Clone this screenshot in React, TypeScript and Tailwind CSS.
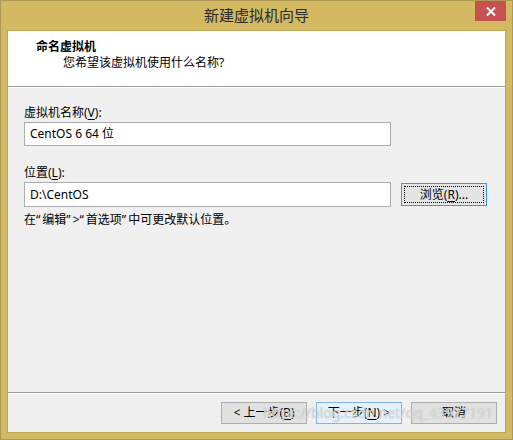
const font = "font-['Noto_Sans','Noto_Sans_CJK_SC',sans-serif]";

function Mnemonic({ k }: { k: string }) {
  return <span className="underline underline-offset-2">{k}</span>;
}

export default function App() {
  return (
    <div
      className={`${font} w-[513px] h-[440px] overflow-hidden flex flex-col bg-[#d2b962] border border-[#ac9a55] px-[7px] pb-[7px] text-[12px] text-black`}
    >
      {/* title bar */}
      <div className="relative h-[30px] flex items-center justify-center">
        <span className="text-[15px] text-[#2b2b2b] -mt-[1px]">新建虚拟机向导</span>
        <button className="absolute right-[-1px] top-0 w-[31px] h-[20px] bg-[#c75050] flex items-center justify-center">
          <svg width="10" height="9" viewBox="0 0 10 9">
            <path d="M1 0.5 L9 8.5 M9 0.5 L1 8.5" stroke="white" strokeWidth="2" />
          </svg>
        </button>
      </div>

      {/* client area */}
      <div className="flex-1 flex flex-col bg-[#f0f0f0] shadow-[0_0_0_1px_#bba653]">
        {/* header */}
        <div className="h-[56px] bg-white border-b border-[#a0a0a0] pt-[8px] pl-[28px] leading-[16px]">
          <div className="font-bold">命名虚拟机</div>
          <div className="pl-[27px]">您希望该虚拟机使用什么名称?</div>
        </div>
        <div className="h-px bg-white" />

        {/* body */}
        <div className="flex-1 flex flex-col px-[16px] pt-[17px] leading-[16px]">
          <div>
            虚拟机名称(<Mnemonic k="V" />):
          </div>
          <div className="mt-[1px] w-[367px] h-[24px] border border-[#abadb3] bg-white px-[5px] flex items-center">
            CentOS 6 64 位
          </div>

          <div className="mt-[19px]">
            位置(<Mnemonic k="L" />):
          </div>
          <div className="mt-[1px] flex items-center gap-[10px]">
            <div className="w-[367px] h-[25px] border border-[#abadb3] bg-white px-[5px] flex items-center">
              D:\CentOS
            </div>
            <button className="w-[86px] h-[23px] border border-[#3c96ea] bg-[#e5e5e5] p-[2px]">
              <span className="w-full h-full border border-dotted border-black flex items-center justify-center">
                浏览(<Mnemonic k="R" />)...
              </span>
            </button>
          </div>

          {/* quotes in the original sit a little apart from the words */}
          <div className="mt-[5px]">
            在<span className="pr-[2px]">“</span>编辑<span className="pr-[2px]">”</span>&gt;<span className="pr-[2px]">“</span>首选项<span className="pr-[2px]">”</span>中可更改默认位置。
          </div>
        </div>

        {/* footer */}
        <div className="relative h-[40px] border-t border-[#a0a0a0] overflow-hidden">
          <div className="h-px bg-white" />
          <div className="flex justify-end gap-[9px] pr-[8px] pt-[8px]">
            <button className="w-[86px] h-[22px] border border-[#adadad] bg-[#e1e1e1] flex items-center justify-center">
              &lt; 上一步(<Mnemonic k="B" />)
            </button>
            <button className="w-[86px] h-[22px] border border-[#7eb4ea] bg-[#e5f1fb] flex items-center justify-center">
              下一步(<Mnemonic k="N" />) &gt;
            </button>
            <button className="w-[86px] h-[22px] border border-[#adadad] bg-[#e1e1e1] flex items-center justify-center">
              取消
            </button>
          </div>
          <span className="absolute left-[255px] top-[11px] text-[14px] leading-[18px] text-white/50 [text-shadow:0_0_1px_#a8a8a8] pointer-events-none whitespace-nowrap">
            https://blog.csdn.net/qq_43927191
          </span>
        </div>
      </div>
    </div>
  );
}
